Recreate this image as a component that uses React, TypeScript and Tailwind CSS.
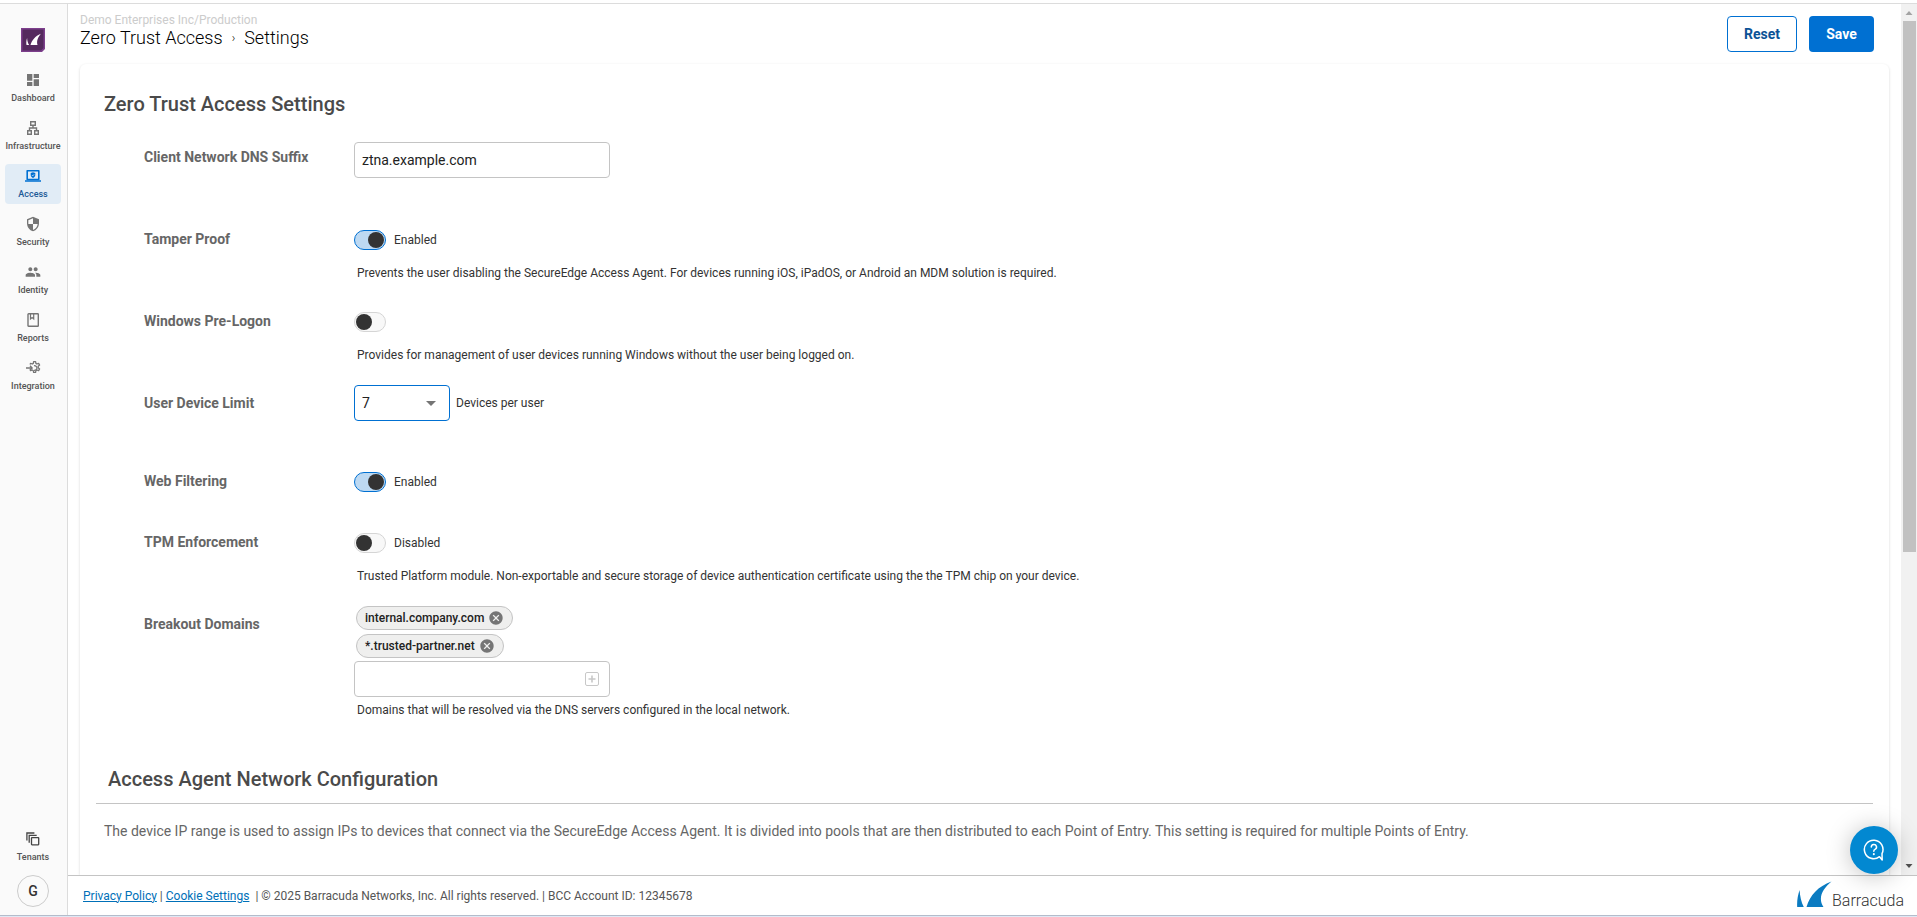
import { useState } from 'react';
import type { ReactNode } from 'react';
import { MdDashboard, MdPeople, MdSecurity, MdCancel, MdArrowDropDown } from 'react-icons/md';

const DEVICE_LIMITS = [1, 2, 3, 4, 5, 6, 7, 8, 9, 10];

function InfrastructureIcon() {
  return (
    <svg width="16" height="16" viewBox="0 0 16 16" fill="none" stroke="currentColor" strokeWidth="1.4">
      <path d="M5.7 1.7h4.6v3.6H5.7zM2.7 10.7h3.6v3.6H2.7zM9.7 10.7h3.6v3.6H9.7zM8 5.3V8M4.5 10.7V8h7v2.7" />
    </svg>
  );
}

function AccessIcon() {
  return (
    <svg width="16" height="16" viewBox="0 0 16 16" fill="currentColor">
      <path fillRule="evenodd" d="M2.4 2h11.2c.6 0 1 .4 1 1v8.2c0 .6-.4 1-1 1H2.4c-.6 0-1-.4-1-1V3c0-.6.4-1 1-1zm.6 1.4v7.4h10V3.4z" />
      <path d="M0 12.2h16v1.6H0zM8 4.3l2.3.8v2c0 1.4-1 2.5-2.3 2.9-1.300-.4-2.300-1.500-2.300-2.900v-2z" />
      <path d="M6.9 7.1l.8.8 1.4-1.5" fill="none" stroke="#fff" strokeWidth=".7" />
    </svg>
  );
}

function ReportsIcon() {
  return (
    <svg width="16" height="16" viewBox="0 0 16 16" fill="none" stroke="currentColor" strokeWidth="1.4">
      <rect x="3" y="1.7" width="10.3" height="12.6" rx="0.6" />
      <path d="M5.5 2v5l1.6-1.4L8.7 7V2" strokeWidth="1.2" />
    </svg>
  );
}

function IntegrationIcon() {
  return (
    <svg width="16" height="16" viewBox="0 0 16 16" fill="none" stroke="currentColor" strokeWidth="1.3" strokeLinejoin="round">
      <path d="M1 8h6M5 5.8L7.2 8 5 10.2" />
      <path d="M5 4.500l.6-1.100 1.800.6.9-.6.300-1.800h2l.3 1.800 1 .6 1.700-.6 1 1.700-1.400 1.200v1.400l1.400 1.200-1 1.800-1.700-.7-1 .7-.3 1.700h-2l-.3-1.700-.9-.7-1.800.7-.6-1.200" />
      <path d="M9 5.8a2.3 2.3 0 1 1 0 4.4" />
    </svg>
  );
}

function TenantsIcon() {
  return (
    <svg width="16" height="16" viewBox="0 0 16 16" fill="none" stroke="currentColor" strokeWidth="1.3">
      <path d="M1.9 9.500V2h7.500M4.200 11.800V4.300h7.500" />
      <rect x="6.5" y="6.6" width="7.2" height="7.2" rx="0.5" />
    </svg>
  );
}

const NAV_ITEMS: { label: string; icon: ReactNode; active?: boolean }[] = [
  { label: 'Dashboard', icon: <MdDashboard size={16} /> },
  { label: 'Infrastructure', icon: <InfrastructureIcon /> },
  { label: 'Access', icon: <AccessIcon />, active: true },
  { label: 'Security', icon: <MdSecurity size={16} /> },
  { label: 'Identity', icon: <MdPeople size={16} /> },
  { label: 'Reports', icon: <ReportsIcon /> },
  { label: 'Integration', icon: <IntegrationIcon /> },
];

function Sidebar() {
  return (
    <aside className="flex w-[68px] shrink-0 flex-col items-center border-r border-[#dcdcdc] bg-[#fafafa] pt-6 pr-px pb-2">
      <a href="#home" aria-label="Barracuda home">
        <svg width="24" height="24" viewBox="0 0 24 24">
          <path d="M0 0h24v21l-3 3H0z" fill="#7d3f8c" />
          <path d="M1.5 1.5h21V20L20 22.500H1.500z" fill="#552a5e" />
          <path d="M5.500 17c-.4-2.500-.2-4.800.6-7 .1 2.800.8 5 2 7zM9.500 17c1.400-5 4.800-9 10.300-11.300-2.800 3.800-4.500 7-3.300 11.300z" fill="#fff" />
        </svg>
      </a>
      <nav className="mt-4 flex flex-col gap-2">
        {NAV_ITEMS.map(({ label, icon, active }) => (
          <a
            key={label}
            href={`#${label.toLowerCase()}`}
            className={`flex h-10 w-14 flex-col items-center gap-1 rounded pt-1 text-[9px] leading-3 font-medium ${
              active ? 'bg-[#e1ecf6] text-[#0070d2]' : 'text-[#757575]'
            }`}
          >
            {icon}
            <span className={active ? 'text-[#1d5a96]' : 'text-[#555]'}>{label}</span>
          </a>
        ))}
      </nav>
      <a href="#tenants" className="mt-auto flex h-10 w-14 flex-col items-center gap-1 pt-1 text-[9px] leading-3 font-medium text-[#444]">
        <TenantsIcon />
        <span className="text-[#555]">Tenants</span>
      </a>
      <button type="button" className="mt-2 size-8 rounded-full border border-[#ccc] text-sm font-medium text-[#333]">
        G
      </button>
    </aside>
  );
}

interface RowProps {
  id: string;
  label: string;
  help?: string;
  className?: string;
  children: ReactNode;
}

function Row({ id, label, help, className = 'min-h-[82px]', children }: RowProps) {
  return (
    <div className={`flex ${className}`}>
      <label htmlFor={id} className="w-[210px] shrink-0 pt-2 text-sm leading-5 font-bold text-[#666]">
        {label}
      </label>
      <div>
        {children}
        {help && <p className="pl-[3px] text-xs leading-4 text-[#333]">{help}</p>}
      </div>
    </div>
  );
}

interface ToggleProps {
  id: string;
  initial?: boolean;
  showState?: boolean;
}

function Toggle({ id, initial = false, showState = true }: ToggleProps) {
  const [on, setOn] = useState(initial);

  return (
    <div className="flex items-center gap-2 pt-[9px] pb-[15px]">
      <input
        id={id}
        type="checkbox"
        role="switch"
        checked={on}
        onChange={(e) => setOn(e.target.checked)}
        className="flex h-5 w-8 appearance-none items-center rounded-full border border-[#d5d5d5] bg-[#f8f8f8] px-px before:size-4 before:rounded-full before:bg-[#333] checked:justify-end checked:border-[#0070d2] checked:bg-[#bdd9f2]"
      />
      {showState && <span className="text-xs leading-4 text-[#333]">{on ? 'Enabled' : 'Disabled'}</span>}
    </div>
  );
}

function BreakoutDomains() {
  const [domains, setDomains] = useState(['internal.company.com', '*.trusted-partner.net']);
  const [draft, setDraft] = useState('');

  const add = () => {
    if (!draft.trim()) return;
    setDomains([...domains, draft.trim()]);
    setDraft('');
  };

  return (
    <div className="mb-[5px]">
      <ul className="mb-[3px] flex flex-col items-start gap-1 pl-0.5">
        {domains.map((domain) => (
          <li key={domain} className="flex h-6 items-center gap-1 rounded-full border border-[#c4c4c4] bg-[#efefee] pr-2 pl-2 text-xs font-medium text-[#222]">
            {domain}
            <button type="button" aria-label={`Remove ${domain}`} onClick={() => setDomains(domains.filter((d) => d !== domain))}>
              <MdCancel size={16} className="text-[#757575]" />
            </button>
          </li>
        ))}
      </ul>
      <div className="flex h-9 w-64 items-center rounded border border-[#c4c4c4] pr-2.5">
        <input
          id="domains"
          type="text"
          value={draft}
          onChange={(e) => setDraft(e.target.value)}
          className="min-w-0 flex-1 px-[7px] text-sm outline-none"
        />
        <button type="button" aria-label="Add domain" onClick={add}>
          <svg width="14" height="14" viewBox="0 0 14 14" fill="none" stroke="#c8c8c8">
            <rect x="0.5" y="0.5" width="13" height="13" rx="1.5" />
            <path d="M7 3.5v7M3.500 7h7" strokeWidth="1.6" />
          </svg>
        </button>
      </div>
    </div>
  );
}

function Header() {
  return (
    <header className="flex items-start justify-between pt-2 pr-[15px]">
      <div>
        <p className="text-xs leading-4 text-[#ccc]">Demo Enterprises Inc/Production</p>
        <h1 className="flex items-center gap-[9px] text-lg leading-5 font-light text-black">
          Zero Trust Access
          <span className="text-xs">›</span>
          Settings
        </h1>
      </div>
      <div className="flex gap-3 pt-1">
        <button type="button" className="h-9 w-[70px] rounded border border-[#0070d2] text-sm font-bold text-[#0b5296]">
          Reset
        </button>
        <button type="button" className="h-9 w-[65px] rounded bg-[#0070d2] text-sm font-bold text-white">
          Save
        </button>
      </div>
    </header>
  );
}

function Scrollbar() {
  return (
    <div aria-hidden="true" className="flex w-4 shrink-0 flex-col items-center bg-[#f1f1f1]">
      <svg width="16" height="17" viewBox="0 0 16 17">
        <path d="M4.500 11h7L8 7z" fill="#a3a3a3" />
      </svg>
      <div className="h-[61%] w-[13px] bg-[#c1c1c1]" />
      <svg width="16" height="17" viewBox="0 0 16 17" className="mt-auto">
        <path d="M4.500 6h7L8 10z" fill="#505050" />
      </svg>
    </div>
  );
}

function Footer() {
  return (
    <footer className="flex h-10 shrink-0 items-center justify-between border-t border-[#c4c4c4] pr-[13px] pl-[15px]">
      <p className="text-xs text-[#555]">
        <a href="#privacy" className="text-[#0070b8] underline">Privacy Policy</a>
        {' | '}
        <a href="#cookies" className="text-[#0070b8] underline">Cookie Settings</a>
        {' \u00a0| © 2025 Barracuda Networks, Inc. All rights reserved. | BCC Account ID: 12345678'}
      </p>
      <div className="flex items-end pt-0.5">
        <svg width="35" height="26" viewBox="0 0 35 26" className="mb-1.5">
          <path d="M.2 26C-.2 20 .8 14.500 2.600 9c.4 6.500 1.600 12 4.200 17zM9.500 26C13 14 21 5.500 34.500.500 25.500 8 20.500 17 26.500 26z" fill="#0b7bc1" />
        </svg>
        <span className="text-base leading-6 font-light text-[#333]">Barracuda</span>
      </div>
    </footer>
  );
}

export default function App() {
  const [suffix, setSuffix] = useState('ztna.example.com');
  const [limit, setLimit] = useState(7);

  return (
    <div className="flex h-screen flex-col border-b border-[#dfe9f5] bg-white pt-[3px] font-[Roboto,sans-serif]">
      <div className="flex min-h-0 flex-1 border-t border-b border-t-[#dcdcdc] border-b-[#b4bccb]">
        <Sidebar />
        <div className="flex min-w-0 flex-1 flex-col">
          <div className="flex min-h-0 flex-1">
            <main className="flex min-w-0 flex-1 flex-col overflow-hidden px-3">
              <Header />
              <section className="mt-3 min-h-0 flex-1 rounded-t-md px-4 pt-[26px] shadow-[0_1px_3px_rgba(0,0,0,0.16)]">
                <h2 className="px-2 text-xl leading-7 font-medium text-[#4a4a4a]">Zero Trust Access Settings</h2>
                <form className="mt-[21px] pl-12" onSubmit={(e) => e.preventDefault()}>
                  <Row id="suffix" label="Client Network DNS Suffix">
                    <input
                      id="suffix"
                      type="text"
                      value={suffix}
                      onChange={(e) => setSuffix(e.target.value)}
                      className="mt-[3px] h-9 w-64 rounded border border-[#c4c4c4] px-[7px] text-sm text-[#222]"
                    />
                  </Row>
                  <Row
                    id="tamper"
                    label="Tamper Proof"
                    help="Prevents the user disabling the SecureEdge Access Agent. For devices running iOS, iPadOS, or Android an MDM solution is required."
                  >
                    <Toggle id="tamper" initial />
                  </Row>
                  <Row
                    id="prelogon"
                    label="Windows Pre-Logon"
                    help="Provides for management of user devices running Windows without the user being logged on."
                  >
                    <Toggle id="prelogon" showState={false} />
                  </Row>
                  <Row id="limit" label="User Device Limit" className="min-h-[78px]">
                    <div className="flex items-center gap-1.5">
                      <div className="relative">
                        <select
                          id="limit"
                          value={limit}
                          onChange={(e) => setLimit(Number(e.target.value))}
                          className="h-9 w-24 appearance-none rounded border border-[#0070d2] px-[7px] text-sm text-[#222]"
                        >
                          {DEVICE_LIMITS.map((n) => (
                            <option key={n} value={n}>{n}</option>
                          ))}
                        </select>
                        <MdArrowDropDown size={24} className="pointer-events-none absolute top-1.5 right-[7px] text-[#757575]" />
                      </div>
                      <span className="text-xs text-[#333]">Devices per user</span>
                    </div>
                  </Row>
                  <Row id="web" label="Web Filtering" className="min-h-[61px]">
                    <Toggle id="web" initial />
                  </Row>
                  <Row
                    id="tpm"
                    label="TPM Enforcement"
                    help="Trusted Platform module. Non-exportable and secure storage of device authentication certificate using the the TPM chip on your device."
                  >
                    <Toggle id="tpm" />
                  </Row>
                  <Row
                    id="domains"
                    label="Breakout Domains"
                    help="Domains that will be resolved via the DNS servers configured in the local network."
                  >
                    <BreakoutDomains />
                  </Row>
                </form>
                <h2 className="mt-[47px] border-b border-[#c4c4c4] px-3 pb-2.5 text-xl leading-7 font-medium text-[#4a4a4a]">
                  Access Agent Network Configuration
                </h2>
                <p className="mt-[17px] px-2 text-sm leading-5 text-[#666]">
                  The device IP range is used to assign IPs to devices that connect via the SecureEdge Access Agent. It is divided into pools that are then distributed to each Point of Entry. This setting is required for multiple Points of Entry.
                </p>
              </section>
            </main>
            <Scrollbar />
          </div>
          <Footer />
        </div>
      </div>
      <button
        type="button"
        aria-label="Help"
        className="fixed right-[19px] bottom-[43px] flex size-12 items-center justify-center rounded-full bg-[#0288d1] shadow-[0_2px_24px_rgba(0,0,0,0.25)]"
      >
        <svg width="22" height="24" viewBox="0 0 22 24" fill="none" stroke="#fff" strokeWidth="1.5" strokeLinecap="round" strokeLinejoin="round">
          <path d="M16.500 18.700A9.300 9.300 0 1 1 19 15.600l.2 6.400z" />
          <path d="M8.300 9a2.600 2.600 0 1 1 3.700 2.400c-.8.400-1.200.9-1.200 1.900" />
          <path d="M10.800 16v.2" strokeWidth="2" />
        </svg>
      </button>
    </div>
  );
}
